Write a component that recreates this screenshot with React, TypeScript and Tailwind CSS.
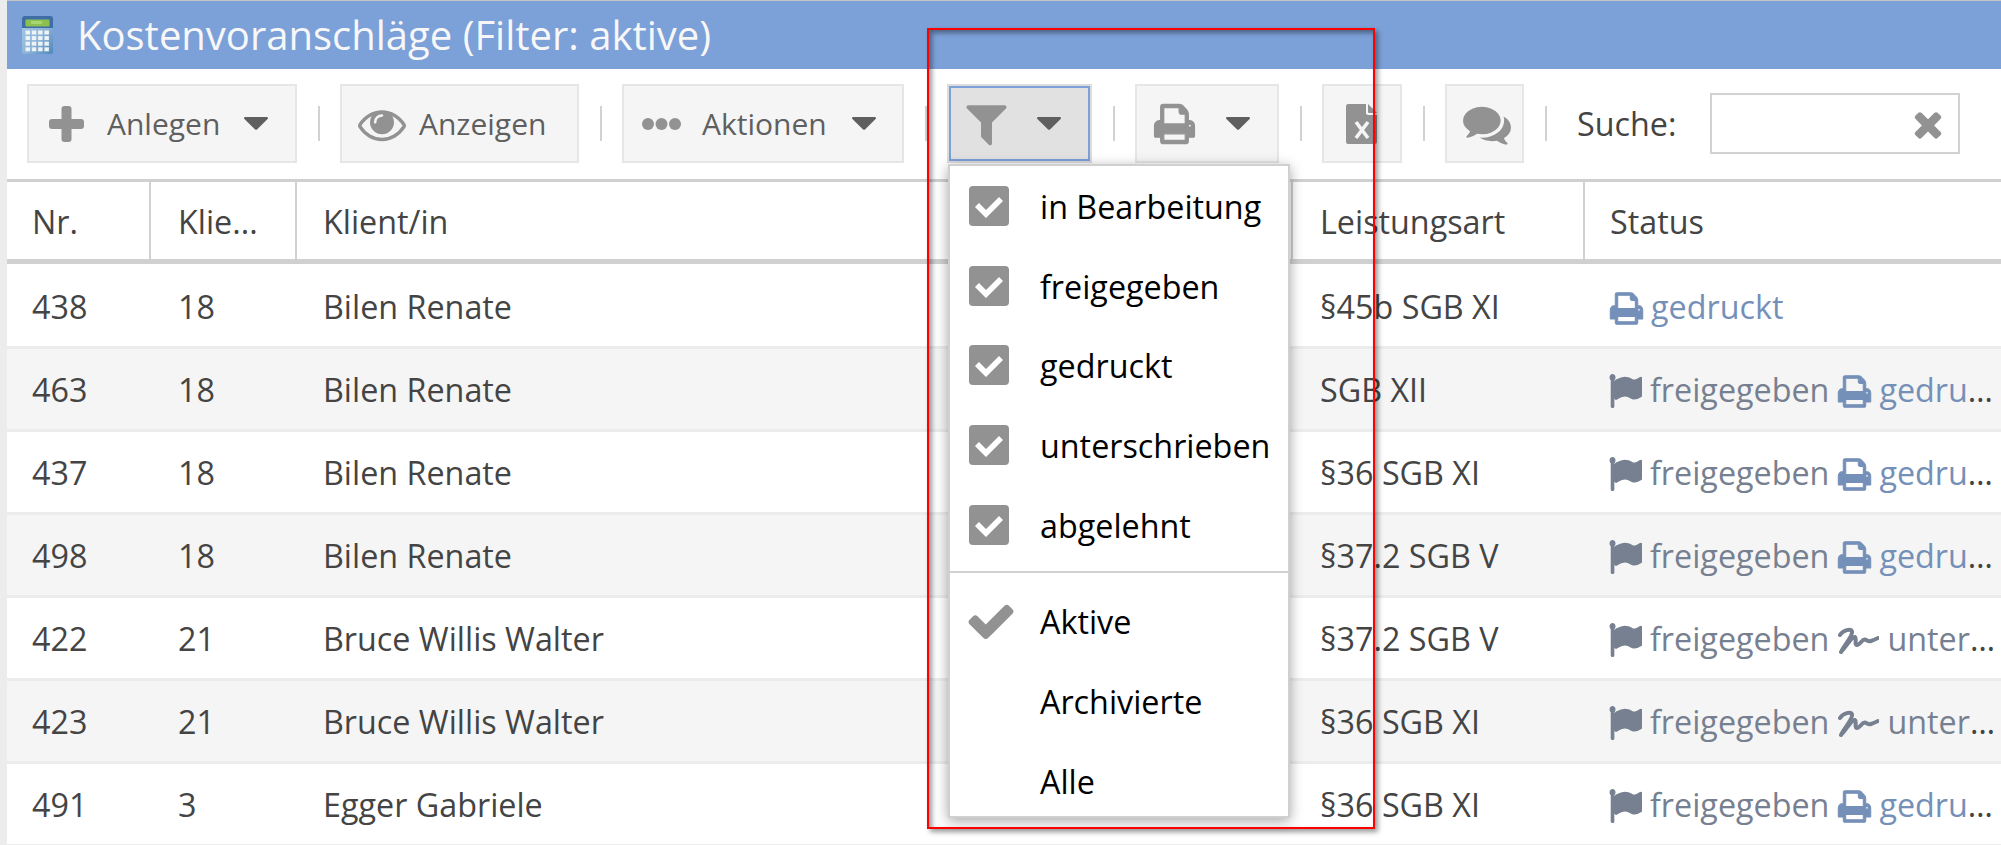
import React from "react";

const P = {
  print: "M448 1536h896v-256h-896v256zm0-640h896v-384h-160q-40 0-68-28t-28-68v-160h-640v640zm1152 64q0-26-19-45t-45-19-45 19-19 45 19 45 45 19 45-19 19-45zm128 0v416q0 13-9.5 22.5t-22.5 9.5h-224v160q0 40-28 68t-68 28h-960q-40 0-68-28t-28-68v-160h-224q-13 0-22.5-9.5t-9.5-22.5v-416q0-79 56.500-135.500t135.500-56.500h64v-544q0-40 28-68t68-28h672q40 0 88 20t76 48l152 152q28 28 48 76t20 88v256h64q79 0 135.500 56.500t56.500 135.500z",
  eye: "M1664 960q-152-236-381-353 61 104 61 225 0 185-131.500 316.500t-316.500 131.500-316.500-131.500-131.500-316.500q0-121 61-225-229 117-381 353 133 205 333.500 326.500t434.500 121.500 434.500-121.500 333.500-326.500zm-720-384q0-20-14-34t-34-14q-125 0-214.500 89.500t-89.500 214.500q0 20 14 34t34 14 34-14 14-34q0-86 61-147t147-61q20 0 34-14t14-34zm848 384q0 34-20 69-140 230-376.500 368.500t-499.500 138.500-499.500-139-376.500-368q-20-35-20-69t20-69q140-229 376.500-368t499.500-139 499.500 139 376.500 368q20 35 20 69z",
  filter: "M1595 295q17 41-14 70l-493 493v742q0 42-39 59-13 5-25 5-27 0-45-19l-256-256q-19-19-19-45v-486l-493-493q-31-29-14-70 17-39 59-39h1280q42 0 59 39z",
  flag: "M320 256q0 72-64 110v1266q0 13-9.500 22.500t-22.500 9.500h-64q-13 0-22.500-9.500t-9.500-22.500v-1266q-64-38-64-110 0-53 37.500-90.500t90.500-37.500 90.500 37.500 37.500 90.500zm1472 64v763q0 25-12.500 38.500t-39.500 27.500q-215 116-369 116-61 0-123.500-22t-108.500-48-115.500-48-142.500-22q-192 0-464 146-17 9-33 9-26 0-45-19t-19-45v-742q0-32 31-55 21-14 79-43 236-120 421-120 107 0 200 29t219 88q38 19 88 19 54 0 117.500-21t110-47 88-47 54.500-21q26 0 45 19t19 45z",
  comments: "M1408 768q0 139-94 257t-256.500 186.500-353.500 68.500q-86 0-176-16-124 88-278 128-36 9-86 16h-3q-11 0-20.500-8t-11.500-21q-1-3-1-6.500t.5-6.500 2-6l2.500-5 3.500-5.500 4-5 4.500-5 4-4.500q5-6 23-25t26-29.500 22.500-29 25-38.500 20.500-44q-124-72-195-177t-71-224q0-139 94-257t256.500-186.500 353.500-68.500 353.500 68.500 256.500 186.500 94 257zm384 256q0 120-71 224.500t-195 176.500q10 24 20.500 44t25 38.500 22.500 29 26 29.500 23 25q1 1 4 4.500t4.500 5 4 5 3.500 5.500l2.500 5 2 6 .5 6.500-1 6.500q-3 14-13 22t-22 7q-50-7-86-16-154-40-278-128-90 16-176 16-271 0-472-132 58 4 88 4 161 0 309-45t264-129q125-92 192-212t67-254q0-77-23-152 129 71 204 178t75 230z",
  times: "M1490 1322q0 40-28 68l-136 136q-28 28-68 28t-68-28l-294-294-294 294q-28 28-68 28t-68-28l-136-136q-28-28-28-68t28-68l294-294-294-294q-28-28-28-68t28-68l136-136q28-28 68-28t68 28l294 294 294-294q28-28 68-28t68 28l136 136q28 28 28 68t-28 68l-294 294 294 294q28 28 28 68z",
  check: "M1671 566q0 40-28 68l-724 724-136 136q-28 28-68 28t-68-28l-136-136-362-362q-28-28-28-68t28-68l136-136q28-28 68-28t68 28l294 295 656-657q28-28 68-28t68 28l136 136q28 28 28 68z",
};

function Fa({ d, className, stretch, thicken }: { d: string; className: string; stretch?: boolean; thicken?: number }) {
  return (
    <svg
      viewBox="0 0 1792 1792"
      preserveAspectRatio={stretch ? "none" : undefined}
      className={className}
      fill="currentColor"
      stroke={thicken ? "currentColor" : undefined}
      strokeWidth={thicken}
      aria-hidden="true"
    >
      <path d={d} />
    </svg>
  );
}

function Caret() {
  return (
    <svg viewBox="0 0 24 13" className="w-[24px] h-[13px] shrink-0 text-[#5f5f5f]" fill="currentColor" aria-hidden="true">
      <path d="M1.2 0h21.6c1 0 1.5 1.2.8 1.9L13 12.4c-.5.5-1.4.5-1.9 0L.4 1.9C-.3 1.2.2 0 1.2 0z" />
    </svg>
  );
}

function Plus() {
  return (
    <svg viewBox="0 0 35 44" className="w-[35px] h-[44px] shrink-0 text-[#929292]" fill="currentColor" aria-hidden="true">
      <rect x="0" y="17" width="35" height="10" rx="3" />
      <rect x="12.500" y="4" width="10" height="36" rx="3" />
    </svg>
  );
}

function Dots() {
  return (
    <svg viewBox="0 0 39 14" className="w-[39px] h-[14px] shrink-0 text-[#929292]" fill="currentColor" aria-hidden="true">
      <circle cx="6" cy="7" r="6" />
      <circle cx="19.500" cy="7" r="6" />
      <circle cx="33" cy="7" r="6" />
    </svg>
  );
}

function Excel() {
  return (
    <svg viewBox="0 0 31 40" className="w-[31px] h-[40px] text-[#929292]" aria-hidden="true">
      <path d="M2 0h18v9c0 1 1 2 2 2h9v27c0 1-1 2-2 2H2c-1 0-2-1-2-2V2C0 1 1 0 2 0z" fill="currentColor" />
      <path d="M22 0l9 9h-8c-.5 0-1-.5-1-1z" fill="currentColor" />
      <path d="M10 18l12 16M22 18L10 34" stroke="#f5f5f5" strokeWidth="3.600" fill="none" />
    </svg>
  );
}

function Signature() {
  return (
    <svg viewBox="0 0 41 28" className="inline-block w-[41px] h-[30px] align-[-5px] mr-[8px]" aria-hidden="true">
      <path
        d="M2 8C5 3 13 1 14 4.500 15 9 6 18 3 25 8 20 14 9 17 10 19 11 16 18 19 18 22 18 24 12 27 12.500 29 13 30 15 33 14 36 13 38 12 40 11"
        fill="none"
        stroke="currentColor"
        strokeWidth="4"
        strokeLinecap="round"
        strokeLinejoin="round"
      />
    </svg>
  );
}

function Calculator() {
  const keys: React.ReactNode[] = [];
  for (let r = 0; r < 4; r++)
    for (let c = 0; c < 4; c++)
      keys.push(<rect key={`${r}-${c}`} x={3.500 + c * 6.300} y={14.500 + r * 5.600} width="4.500" height="4" fill="#eef3f6" />);
  return (
    <svg viewBox="0 0 31 38" className="w-[31px] h-[38px] shrink-0" aria-hidden="true">
      <defs>
        <linearGradient id="calcBody" x1="0" y1="0" x2="1" y2="1">
          <stop offset="0" stopColor="#a9cbe6" />
          <stop offset="0.55" stopColor="#8db4d8" />
          <stop offset="1" stopColor="#4f86bd" />
        </linearGradient>
      </defs>
      <rect x="0" y="0" width="31" height="38" rx="2.500" fill="url(#calcBody)" />
      <path d="M2.500 0h26A2.500 2.500 0 0 1 31 2.500V12H0V2.500A2.500 2.500 0 0 1 2.500 0z" fill="#3f6ea6" />
      <rect x="3.500" y="3.500" width="24" height="7" rx="1" fill="#8cc152" />
      <rect x="9" y="5" width="11" height="3" fill="#a8d670" />
      {keys}
    </svg>
  );
}

function Sep() {
  return <div className="w-[2px] h-[35px] mx-[20.5px] shrink-0 bg-[#d2d2d2]" />;
}

function Btn({ w, active, children }: { w: string; active?: boolean; children: React.ReactNode }) {
  return (
    <div
      className={`${w} h-[79px] shrink-0 flex items-center border-2 text-[#5f5f5f] ${
        active ? "border-[#dcdcdc] bg-[#e1e1e1]" : "border-[#e6e6e6] bg-[#f5f5f5]"
      }`}
    >
      {children}
    </div>
  );
}

type S = "f" | "g" | "u";
const rows: [string, string, string, string, S[]][] = [
  ["438", "18", "Bilen Renate", "§45b SGB XI", ["g"]],
  ["463", "18", "Bilen Renate", "SGB XII", ["f", "g"]],
  ["437", "18", "Bilen Renate", "§36 SGB XI", ["f", "g"]],
  ["498", "18", "Bilen Renate", "§37.2 SGB V", ["f", "g"]],
  ["422", "21", "Bruce Willis Walter", "§37.2 SGB V", ["f", "u"]],
  ["423", "21", "Bruce Willis Walter", "§36 SGB XI", ["f", "u"]],
  ["491", "3", "Egger Gabriele", "§36 SGB XI", ["f", "g"]],
];

function Status({ s }: { s: S }) {
  if (s === "f")
    return (
      <span className="text-[#768090] mr-[9px]">
        <Fa d={P.flag} stretch thicken={70} className="inline-block w-[33px] h-[38px] align-[-8px] mr-[8px] -ml-[1px]" />
        freigegeben
      </span>
    );
  if (s === "g")
    return (
      <span className="text-[#7590b8]">
        <Fa d={P.print} stretch thicken={50} className="inline-block w-[35px] h-[37px] align-[-8px] mr-[7px] -ml-[1px]" />
        gedruckt
      </span>
    );
  return (
    <span className="text-[#768090]">
      <Signature />
      unterschrieben
    </span>
  );
}

function CheckRow({ label }: { label: string }) {
  return (
    <div className="h-[79.7px] flex items-center pl-[19px] text-black">
      <svg viewBox="0 0 40 40" className="w-[40px] h-[40px] shrink-0 mr-[31px]" aria-hidden="true">
        <rect width="40" height="40" rx="4" fill="#929292" />
        <path d="M6 21l4-4 7 7 13-13 4 4-17 17z" fill="#fff" />
      </svg>
      {label}
    </div>
  );
}

const columns = "grid grid-cols-[144px_146px_996px_292px_416px]";

export default function App() {
  return (
    <div className="relative w-[2001px] h-[845px] overflow-hidden flex bg-white font-['Open_Sans',sans-serif] text-[32.3px] leading-[40px] text-[#444]">
      <div className="w-[7px] shrink-0 bg-[#ececec]" />
      <div className="flex-1 min-w-0 flex flex-col">
        <div className="h-[69px] shrink-0 flex items-center gap-[24px] pl-[15px] bg-[#7ca0d8] border-t border-[#c4c4c4] text-[40px] text-[#f7f7f7]">
          <Calculator />
          <span>Kostenvoranschläge (Filter: aktive)</span>
        </div>

        <div className="h-[110px] shrink-0 flex items-center pt-[15px] pb-[16px] pl-[20px] text-[30px]">
          <Btn w="w-[270px]">
            <div className="ml-[20px] mr-[23px] flex">
              <Plus />
            </div>
            <span>Anlegen</span>
            <div className="ml-[24px]">
              <Caret />
            </div>
          </Btn>
          <Sep />
          <Btn w="w-[239px]">
            <Fa d={P.eye} className="w-[48px] h-[48px] ml-[16px] mr-[13px] shrink-0 text-[#929292]" />
            <span>Anzeigen</span>
          </Btn>
          <Sep />
          <Btn w="w-[282px]">
            <div className="ml-[18px] mr-[21px] flex">
              <Dots />
            </div>
            <span>Aktionen</span>
            <div className="ml-[25px]">
              <Caret />
            </div>
          </Btn>
          <Sep />
          <Btn w="w-[145px]" active>
            <div className="w-full h-full border-2 border-[#7ca0d8] flex items-center">
              <Fa d={P.filter} className="w-[51px] h-[51px] ml-[10px] mr-[25px] shrink-0 text-[#929292]" />
              <Caret />
            </div>
          </Btn>
          <Sep />
          <Btn w="w-[144px]">
            <Fa d={P.print} stretch thicken={50} className="w-[43px] h-[46px] ml-[16px] mr-[30px] shrink-0 text-[#929292]" />
            <Caret />
          </Btn>
          <Sep />
          <Btn w="w-[80px]">
            <div className="ml-[22px] flex">
              <Excel />
            </div>
          </Btn>
          <Sep />
          <Btn w="w-[79px]">
            <Fa d={P.comments} className="w-[48px] h-[48px] ml-[16px] shrink-0 text-[#929292]" />
          </Btn>
          <Sep />
          <div className="h-[79px] flex items-center ml-[10px] text-[32.3px]">
            <span className="-mt-[1px]">Suche:</span>
            <div className="ml-[34px] w-[250px] h-[61px] border-2 border-[#d2d2d2] flex items-center justify-end pr-[10px]">
              <Fa d={P.times} className="w-[40px] h-[40px] text-[#929292]" />
            </div>
          </div>
        </div>

        <div className={`${columns} h-[85px] shrink-0 border-t-[3px] border-b-[5px] border-[#d0d0d0] items-center`}>
          <div className="h-full flex items-center pl-[25px] border-r-2 border-[#d0d0d0]">Nr.</div>
          <div className="h-full flex items-center pl-[27px] border-r-2 border-[#d0d0d0]">Klie...</div>
          <div className="h-full flex items-center pl-[26px] border-r-2 border-[#d0d0d0]">Klient/in</div>
          <div className="h-full flex items-center pl-[27px] border-r-2 border-[#d0d0d0]">Leistungsart</div>
          <div className="h-full flex items-center pl-[25px]">Status</div>
        </div>

        <div className="pt-[2px]">
          {rows.map((r, i) => (
            <div
              key={r[0]}
              className={`${columns} h-[83px] items-center border-b-[3px] border-[#ececec] ${i % 2 ? "bg-[#f5f5f5]" : "bg-white"}`}
            >
              <div className="pl-[25px]">{r[0]}</div>
              <div className="pl-[27px]">{r[1]}</div>
              <div className="pl-[26px]">{r[2]}</div>
              <div className="pl-[27px]">{r[3]}</div>
              <div className="pl-[25px] pr-[2px] truncate">
                {r[4].map((s) => (
                  <Status key={s} s={s} />
                ))}
              </div>
            </div>
          ))}
        </div>
      </div>

      <div className="absolute left-[948px] top-[164px] w-[342px] h-[654px] bg-white border-2 border-[#d0d0d0] shadow-[0_3px_12px_rgba(0,0,0,0.35)] text-[32.3px] overflow-hidden">
        <CheckRow label="in Bearbeitung" />
        <CheckRow label="freigegeben" />
        <CheckRow label="gedruckt" />
        <CheckRow label="unterschrieben" />
        <CheckRow label="abgelehnt" />
        <div className="h-[2px] mt-[7px] mb-[8px] bg-[#d0d0d0]" />
        <div className="h-[79.7px] flex items-center text-black">
          <Fa d={P.check} className="w-[52px] h-[52px] ml-[15px] mr-[23px] shrink-0 text-[#929292]" />
          Aktive
        </div>
        <div className="h-[79.7px] flex items-center pl-[90px] text-black">Archivierte</div>
        <div className="h-[79.7px] flex items-center pl-[90px] text-black">Alle</div>
      </div>

      <div className="absolute left-[927px] top-[28px] w-[448px] h-[801px] border-2 border-[#ff0000] pointer-events-none shadow-[3px_3px_5px_rgba(0,0,0,0.4),inset_3px_3px_5px_rgba(0,0,0,0.4)]" />
    </div>
  );
}
